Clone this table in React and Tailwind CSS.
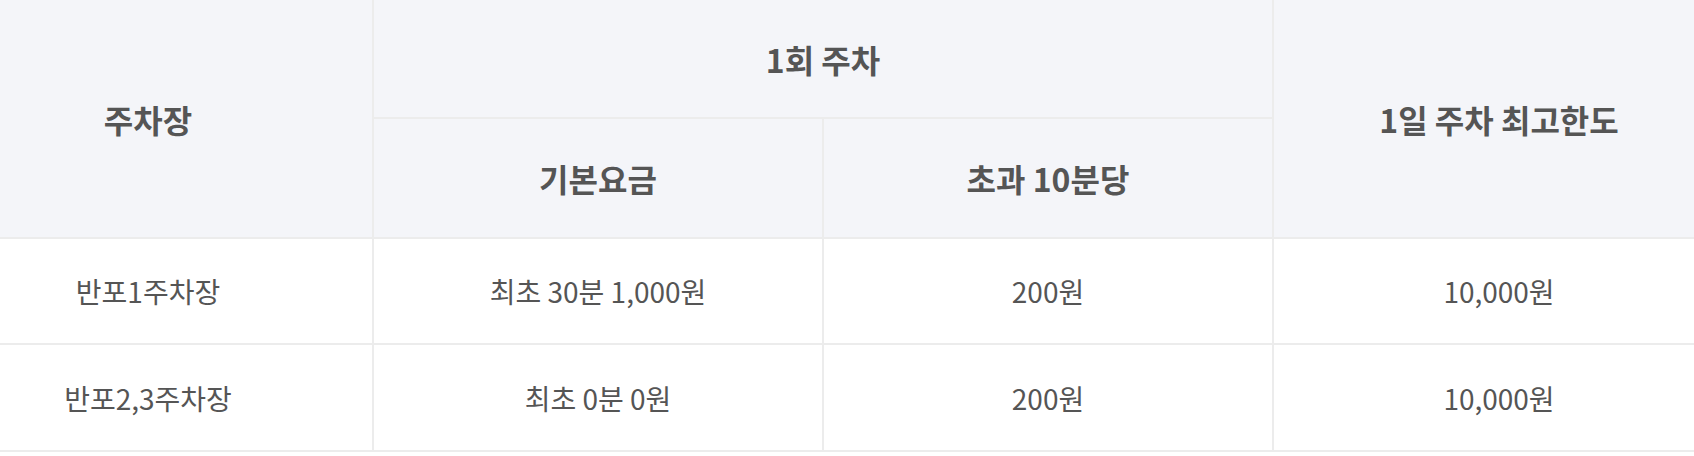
const rows = [
  { name: "반포1주차장", base: "최초 30분 1,000원", extra: "200원", max: "10,000원" },
  { name: "반포2,3주차장", base: "최초 0분 0원", extra: "200원", max: "10,000원" },
];

export default function App() {
  return (
    <div className="w-[1694px] h-[456px] bg-white overflow-hidden font-['Noto_Sans_CJK_KR','Noto_Sans',sans-serif] text-[#555555]">
      <table className="w-[1694px] table-fixed border-collapse text-center">
        <colgroup>
          <col className="w-[373px]" />
          <col className="w-[450px]" />
          <col className="w-[450px]" />
          <col className="w-[421px]" />
        </colgroup>
        <thead className="bg-[#f4f5f9] text-[32px] font-bold">
          <tr className="h-[118px]">
            <th rowSpan={2} className="border-b-2 border-[#ececec] pr-[76px] font-bold">
              주차장
            </th>
            <th colSpan={2} className="border-b-2 border-l-2 border-[#ececec] font-bold">
              1회 주차
            </th>
            <th rowSpan={2} className="border-b-2 border-l-2 border-[#ececec] pl-[30px] font-bold">
              1일 주차 최고한도
            </th>
          </tr>
          <tr className="h-[120px]">
            <th className="border-b-2 border-l-2 border-[#ececec] font-bold">기본요금</th>
            <th className="border-b-2 border-l-2 border-[#ececec] font-bold">초과 10분당</th>
          </tr>
        </thead>
        <tbody className="text-[28px]">
          {rows.map((row, i) => (
            <tr key={row.name} className={i === 0 ? "h-[106px]" : "h-[107px]"}>
              <td className="border-b-2 border-[#ececec] pr-[76px]">{row.name}</td>
              <td className="border-b-2 border-l-2 border-[#ececec]">{row.base}</td>
              <td className="border-b-2 border-l-2 border-[#ececec]">{row.extra}</td>
              <td className="border-b-2 border-l-2 border-[#ececec] pl-[30px]">{row.max}</td>
            </tr>
          ))}
        </tbody>
      </table>
    </div>
  );
}
